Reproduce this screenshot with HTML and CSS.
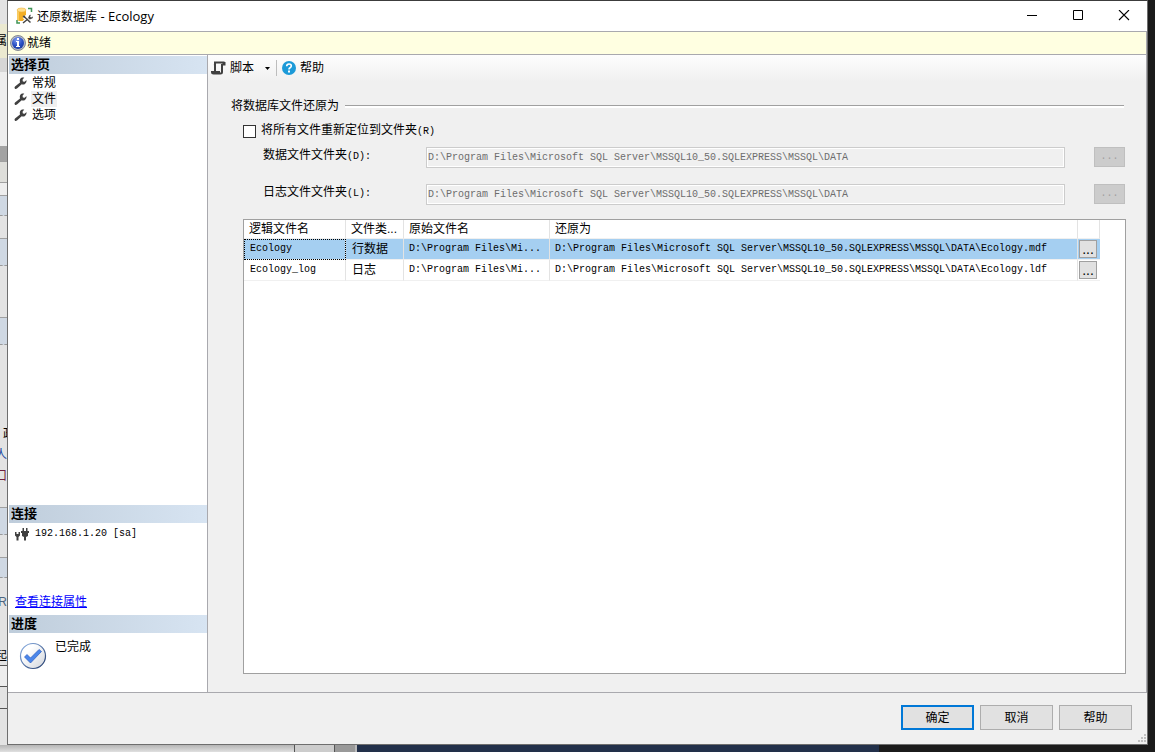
FILE: index.html
```html
<!DOCTYPE html>
<html lang="zh-CN">
<head>
<meta charset="utf-8">
<title>还原数据库 - Ecology</title>
<link rel="stylesheet" href="styles.css">
</head>
<body>
<div class="desktop">
  <div class="behind" aria-hidden="true">
    <div class="strip h24"></div>
    <div class="strip cream h34"><span>属</span></div>
    <div class="strip shade h14"></div>
    <div class="strip pale h74"></div>
    <div class="strip dark h15"></div>
    <div class="strip warm line h21"></div>
    <div class="strip pale line h13"></div>
    <div class="strip blue line h21"></div>
    <div class="strip h22"></div>
    <div class="strip blue line h28"></div>
    <div class="strip h51"></div>
    <div class="strip blue line h28"></div>
    <div class="strip h78"></div>
    <div class="strip h21"><span class="start">政</span></div>
    <div class="strip h21 navy"><span>人</span></div>
    <div class="strip h21 wine"><span>口</span></div>
    <div class="strip h21"></div>
    <div class="strip blue line h28"></div>
    <div class="strip h22"></div>
    <div class="strip blue line h21"></div>
    <div class="strip h13"></div>
    <div class="strip h21 slate"><span>R</span></div>
    <div class="strip h34"></div>
    <div class="strip h19"><span>起</span></div>
    <div class="strip pale edge h21"></div>
    <div class="strip edge h22"></div>
    <div class="strip edge rest"></div>
  </div>

  <div class="window">
    <header class="titlebar">
      <svg class="app-icon" width="18" height="18" viewBox="0 0 18 18">
        <path d="M1 3v9q0 2 4.500 2t4.500-2V3" fill="#f3ae25"/>
        <path d="M1 3v9q0 1 2 1.500V4z" fill="#f8cb60"/>
        <ellipse cx="5.500" cy="3" rx="4.500" ry="2" fill="#ffdf8b" stroke="#eeb23d" stroke-width=".6"/>
        <path d="M12 1.500h3.500V5M1 13v3h3" fill="none" stroke="#3f9456" stroke-width="1.500"/>
        <path d="M8 15.500l6.500-6M8 9.500l7 6" stroke="#fff" stroke-width="4"/>
        <path d="M7 16l5-4M8 9.500l6.500 6" stroke="#454545" stroke-width="1.500"/>
        <path d="M12 11l1.500-3 1.500-.3-.9 1.800.9.900 2-.9-.4 1.800-2.800 1.200zM6.500 9l2-.5.9 1.500-1.400.9z" fill="#454545"/>
      </svg>
      <h1>还原数据库<span class="latin"> - Ecology</span></h1>
      <div class="caption-buttons">
        <button type="button" aria-label="最小化"><svg width="12" height="12"><path d="M1 5.500h10" stroke="#000"/></svg></button>
        <button type="button" aria-label="最大化"><svg width="12" height="12"><path d="M1.500 .5h9v9h-9z" fill="none" stroke="#000"/></svg></button>
        <button type="button" aria-label="关闭"><svg width="12" height="12"><path d="M1 0l10 10M11 0L1 10" stroke="#000" stroke-width="1.100"/></svg></button>
      </div>
    </header>

    <div class="status">
      <svg width="16" height="16" viewBox="0 0 16 16">
        <defs><radialGradient id="info" cx=".4" cy=".25" r=".8"><stop offset="0" stop-color="#7e9cf0"/><stop offset=".6" stop-color="#2a50c4"/><stop offset="1" stop-color="#173a9e"/></radialGradient></defs>
        <circle cx="8" cy="8" r="7.500" fill="#b8bdc8" stroke="#6c7282" stroke-width=".8"/>
        <circle cx="8" cy="8" r="6" fill="url(#info)"/>
        <path d="M7 3h2v2H7zM6 6h3v6H7V7H6zM6 11h4v1H6z" fill="#fff"/>
      </svg>
      <span>就绪</span>
    </div>

    <div class="body">
      <aside class="sidebar">
        <h2>选择页</h2>
        <nav class="pages">
          <button type="button"><svg width="13" height="13" viewBox="0 0 13 13"><path class="ink" d="M1 9.500l5-4Q5 2 8 .6l2.300-.1-1.800 2.300.4 1.600 1.800.3 1.800-1.700Q13 5.500 11 7 9.300 8 7.700 7.300L3 11.500q-1.500.9-2.200-.1T1 9.500z"/></svg><span>常规</span></button>
          <button type="button" class="current"><svg width="13" height="13" viewBox="0 0 13 13"><path class="ink" d="M1 9.500l5-4Q5 2 8 .6l2.300-.1-1.800 2.300.4 1.600 1.800.3 1.800-1.700Q13 5.500 11 7 9.300 8 7.700 7.300L3 11.500q-1.500.9-2.200-.1T1 9.500z"/></svg><span>文件</span></button>
          <button type="button"><svg width="13" height="13" viewBox="0 0 13 13"><path class="ink" d="M1 9.500l5-4Q5 2 8 .6l2.300-.1-1.800 2.300.4 1.600 1.800.3 1.800-1.700Q13 5.500 11 7 9.300 8 7.700 7.300L3 11.500q-1.500.9-2.200-.1T1 9.500z"/></svg><span>选项</span></button>
        </nav>
        <h2>连接</h2>
        <div class="connection">
          <div class="server">
            <svg width="14" height="14" viewBox="0 0 14 14"><path class="ink" d="M0 5h1.500v2h2V5H5v3.500L3.500 10v3.500h-2V10L0 8.500zM6 4h8v2h-1v3l-2 1v3.500H9V10L7 9V6H6zM7.500 1H9v3H7.500zM11 1h1.500v3H11z"/></svg>
            <span class="mono">192.168.1.20 [sa]</span>
          </div>
          <a href="#properties">查看连接属性</a>
        </div>
        <h2>进度</h2>
        <div class="progress">
          <svg width="28" height="28" viewBox="0 0 28 28">
            <defs><linearGradient id="disc" x1="0" y1="0" x2="1" y2="1"><stop offset=".3" stop-color="#fff"/><stop offset="1" stop-color="#cfd3da"/></linearGradient>
            <linearGradient id="rim" x1="0" y1="0" x2="1" y2="1"><stop offset="0" stop-color="#8fb4e8"/><stop offset="1" stop-color="#1c3567"/></linearGradient></defs>
            <circle cx="14" cy="14" r="12.500" fill="url(#disc)" stroke="url(#rim)" stroke-width="1.200"/>
            <path d="M5.500 15l2.500-2.500 3.500 3.500 8.500-8.500 2.500 2-11 11.500z" fill="#4a86ea" stroke="#2a5cc0" stroke-width=".7"/>
          </svg>
          <span>已完成</span>
        </div>
      </aside>

      <main class="main">
        <div class="toolbar">
          <button type="button">
            <svg width="16" height="16" viewBox="0 0 16 16"><path d="M4 11V2.500h9.500M4.500 2.500Q3.500 4 4 6M11 4v8q0 1.500-1.500 1.500H2.500Q1 13.500 1 12h8" fill="none" stroke="#404040" stroke-width="2"/><path d="M11 2h3.500v3.500H12z" fill="#404040"/></svg>
            <span>脚本</span>
            <svg class="caret" width="5" height="3"><path d="M0 0h5L2.500 3z" fill="#000"/></svg>
          </button>
          <span class="separator"></span>
          <button type="button" class="help">
            <svg width="14" height="14" viewBox="0 0 14 14"><circle cx="7" cy="7" r="7" fill="#1c9ad8"/><path d="M4.700 5.300q0-2.300 2.300-2.300t2.300 2q0 1-1.200 1.700T7 8.500" fill="none" stroke="#fff" stroke-width="1.600"/><path d="M6 9.500h2v2H6z" fill="#fff"/></svg>
            <span>帮助</span>
          </button>
        </div>

        <section class="content">
          <h3>将数据库文件还原为</h3>
          <div class="group">
            <label class="relocate"><input type="checkbox"><span>将所有文件重新定位到文件夹<span class="mono">(R)</span></span></label>
            <div class="field">
              <label for="data">数据文件文件夹<span class="mono">(D):</span></label>
              <input id="data" type="text" disabled value="D:\Program Files\Microsoft SQL Server\MSSQL10_50.SQLEXPRESS\MSSQL\DATA">
              <button type="button" disabled>...</button>
            </div>
            <div class="field">
              <label for="log">日志文件文件夹<span class="mono">(L):</span></label>
              <input id="log" type="text" disabled value="D:\Program Files\Microsoft SQL Server\MSSQL10_50.SQLEXPRESS\MSSQL\DATA">
              <button type="button" disabled>...</button>
            </div>
            <div class="grid">
              <table>
                <colgroup><col class="c-name"><col class="c-type"><col class="c-orig"><col><col class="c-more"></colgroup>
                <thead><tr><th>逻辑文件名</th><th>文件类...</th><th>原始文件名</th><th>还原为</th><th></th></tr></thead>
                <tbody>
                  <tr class="selected"><td class="mono focus">Ecology</td><td>行数据</td><td class="mono">D:\Program Files\Mi...</td><td class="mono">D:\Program Files\Microsoft SQL Server\MSSQL10_50.SQLEXPRESS\MSSQL\DATA\Ecology.mdf</td><td class="more"><button type="button">...</button></td></tr>
                  <tr><td class="mono">Ecology_log</td><td>日志</td><td class="mono">D:\Program Files\Mi...</td><td class="mono">D:\Program Files\Microsoft SQL Server\MSSQL10_50.SQLEXPRESS\MSSQL\DATA\Ecology.ldf</td><td class="more"><button type="button">...</button></td></tr>
                </tbody>
              </table>
            </div>
          </div>
        </section>
      </main>
    </div>

    <footer class="actions">
      <button type="button" class="default">确定</button>
      <button type="button">取消</button>
      <button type="button">帮助</button>
      <svg class="grip" width="9" height="9"><path d="M6 0h2v2H6zM3 3h2v2H3zM6 3h2v2H6zM0 6h2v2H0zM3 6h2v2H3zM6 6h2v2H6z" fill="#bfbfbf"/></svg>
    </footer>
  </div>

  <div class="right-edge"></div>
  <div class="under" aria-hidden="true">
    <span class="sheet"></span><span class="bar"></span><span class="scroll"></span><span class="navy-panel"></span><span class="black-panel"></span>
  </div>
</div>
</body>
</html>
```
FILE: styles.css
```css
* { box-sizing: border-box; }

body {
  margin: 0;
  background: #1b1b1b;
  color: #000;
  font: 12px/16px "Liberation Sans", "Noto Sans CJK SC", sans-serif;
}

button {
  margin: 0;
  padding: 0;
  border: 0;
  background: none;
  color: inherit;
  font: inherit;
}

h1, h2, h3 { margin: 0; font-size: 12px; font-weight: 400; }
svg { display: block; flex: none; }
.ink { fill: #404040; }
.mono { font-family: "Liberation Mono", monospace; font-size: 10px; }

.desktop {
  display: grid;
  grid-template-columns: 7px minmax(0, 1fr) 7px;
  grid-template-rows: minmax(0, 1fr) 7px;
  height: 100vh;
}

/* Slice of the window that lies behind the dialog */
.behind { display: flex; flex-direction: column; overflow: hidden; background: #e3e3e3; }
.strip { display: flex; flex: none; align-items: center; justify-content: flex-end; overflow: hidden; background: #e3e3e3; }
.strip .start { width: 4px; }
.cream { background: #ebe9d0; }
.shade { background: #d6d6d6; }
.pale { background: #ededed; }
.dark { background: #a3a3a3; }
.warm { background: #dededa; }
.blue { background: #cfd8e3; border-bottom: 1px dashed #999; }
.line { border-top: 1px solid #a0a0a0; }
.edge { border-top: 1px solid #555; }
.navy { color: #1846a0; }
.wine { color: #702040; }
.slate { color: #4c6680; }
.h13 { height: 13px; }
.h14 { height: 14px; }
.h15 { height: 15px; }
.h19 { height: 19px; }
.h21 { height: 21px; }
.h22 { height: 22px; }
.h24 { height: 24px; }
.h28 { height: 28px; }
.h34 { height: 34px; }
.h51 { height: 51px; }
.h74 { height: 74px; }
.h78 { height: 78px; }
.rest { flex: 1; }

.right-edge { background: #1b1b1b; }
.under { grid-column: 1 / -1; display: flex; }
.sheet { width: 294px; background: linear-gradient(#b5b5b5, #e0e0e0); }
.bar { width: 41px; border-left: 1px solid #555; border-right: 1px solid #555; background: #ccc; }
.scroll { width: 22px; background: #999; border-right: 2px solid #bbb; }
.navy-panel { width: 522px; background: #22304a; }
.black-panel { flex: 1; background: #1b1b1b; }

.window {
  display: flex;
  flex-direction: column;
  min-width: 0;
  border: 1px solid #6e6e6e;
  border-top-color: #3c3c3c;
  background: #f0f0f0;
}

.titlebar { display: flex; align-items: center; height: 30px; padding-left: 8px; background: #fff; }
.titlebar h1 { flex: 1; padding-left: 3px; font-family: "Open Sans", "Noto Sans CJK SC", sans-serif; }
.titlebar .latin { font-size: 13px; }
.caption-buttons { display: flex; }
.caption-buttons button { display: grid; place-items: center; width: 46px; height: 30px; }

.status {
  display: flex;
  align-items: center;
  gap: 1px;
  height: 24px;
  padding-left: 2px;
  border: 1px solid #a9a9ae;
  border-left: 0;
  background: #ffffe1;
}

.body { display: flex; flex: 1; min-height: 0; border-right: 1px solid #a9a9ae; border-bottom: 1px solid #a9a9ae; }

.sidebar {
  display: flex;
  flex-direction: column;
  width: 200px;
  padding: 1px 0 0 1px;
  border-right: 1px solid #a9a9ae;
  background: #fff;
}
.sidebar h2 {
  padding-left: 2px;
  background: linear-gradient(90deg, #bfcddb, #d7e4f2);
  font-size: 13px;
  font-weight: 700;
  line-height: 18px;
}
.pages { flex: 1; padding-top: 1px; }
.pages button { display: flex; align-items: center; gap: 4px; height: 16px; padding-left: 5px; }
.pages span { padding: 0 1px; line-height: 16px; }
.pages .current span { background: #f0f0f0; }
.connection { display: flex; flex-direction: column; justify-content: space-between; height: 92px; padding: 3px 6px 5px; }
.server { display: flex; align-items: center; gap: 6px; }
.connection a { color: #00f; }
.progress { display: flex; gap: 8px; height: 59px; padding: 6px 0 0 10px; }
.progress svg { margin-top: 3px; }

.main { display: flex; flex: 1; flex-direction: column; min-width: 0; }
.toolbar {
  display: flex;
  align-items: center;
  height: 26px;
  padding-left: 3px;
  background: linear-gradient(#fdfdfd, #f0f0f0);
}
.toolbar button { display: flex; align-items: center; gap: 3px; }
.toolbar .caret { margin: 0 1px 0 8px; }
.separator { width: 1px; height: 16px; margin: 0 5px; background: #bdbdbd; }
.toolbar .help { gap: 4px; }

.content { display: flex; flex: 1; flex-direction: column; padding: 17px 20px 18px 23px; }
.content h3 { display: flex; align-items: center; gap: 6px; }
.content h3::after { content: ""; flex: 1; height: 2px; margin-right: 2px; border-top: 1px solid #a0a0a0; background: #fff; }
.group { display: flex; flex: 1; flex-direction: column; padding-left: 12px; }
.relocate { display: flex; align-items: center; gap: 5px; margin: 8px 0 7px; }
.relocate input { appearance: none; width: 13px; height: 13px; margin: 0; border: 1px solid #333; background: #fff; }

.field { display: flex; align-items: flex-start; height: 21px; margin-bottom: 16px; padding: 0 1px 0 20px; }
.field + .grid { margin-top: -2px; }
.field label { width: 163px; }
.field input {
  flex: 1;
  min-width: 0;
  height: 21px;
  padding: 0 1px;
  border: 1px solid #ccc;
  outline: 1px solid #fff;
  outline-offset: -2px;
  background: #f0f0f0;
  color: #6d6d6d;
  font: 10px/16px "Liberation Mono", monospace;
}
.field button { width: 31px; height: 20px; margin-left: 29px; border: 1px solid #bfbfbf; background: #ccc; color: #a0a0a0; font: 10px/16px "Liberation Mono", monospace; }

.grid { flex: 1; padding-right: 25px; border: 1px solid #a0a0a0; background: #fff; }
table { width: 100%; table-layout: fixed; border-collapse: separate; border-spacing: 0; }
.c-name { width: 102px; }
.c-type { width: 58px; }
.c-orig { width: 146px; }
.c-more { width: 22px; }
th, td { padding: 0 5px; border-right: 1px solid #e3e3e3; border-bottom: 1px solid #f0f0f0; overflow: hidden; text-align: left; white-space: nowrap; }
th { height: 19px; padding-right: 0; line-height: 18px; font-weight: 400; }
td { height: 21px; line-height: 20px; padding-left: 6px; }
td:nth-child(n+3) { padding-left: 5px; }
.selected td { background: #a5cff1; }
.focus { outline: 1px dotted #000; outline-offset: -1px; }
td.more { padding: 0 1px; border-right: 0; }
.more button { display: block; width: 18px; height: 18px; border: 1px solid #a0a0a0; background: #e1e1e1; font-size: 14px; line-height: 16px; }

.actions { display: flex; align-items: flex-start; justify-content: flex-end; gap: 6px; height: 51px; padding: 12px 0 0; }
.actions button { width: 73px; height: 25px; border: 1px solid #adadad; background: #e1e1e1; }
.actions .default { border: 2px solid #0078d7; }
.grip { align-self: flex-end; margin-bottom: 1px; }
```
